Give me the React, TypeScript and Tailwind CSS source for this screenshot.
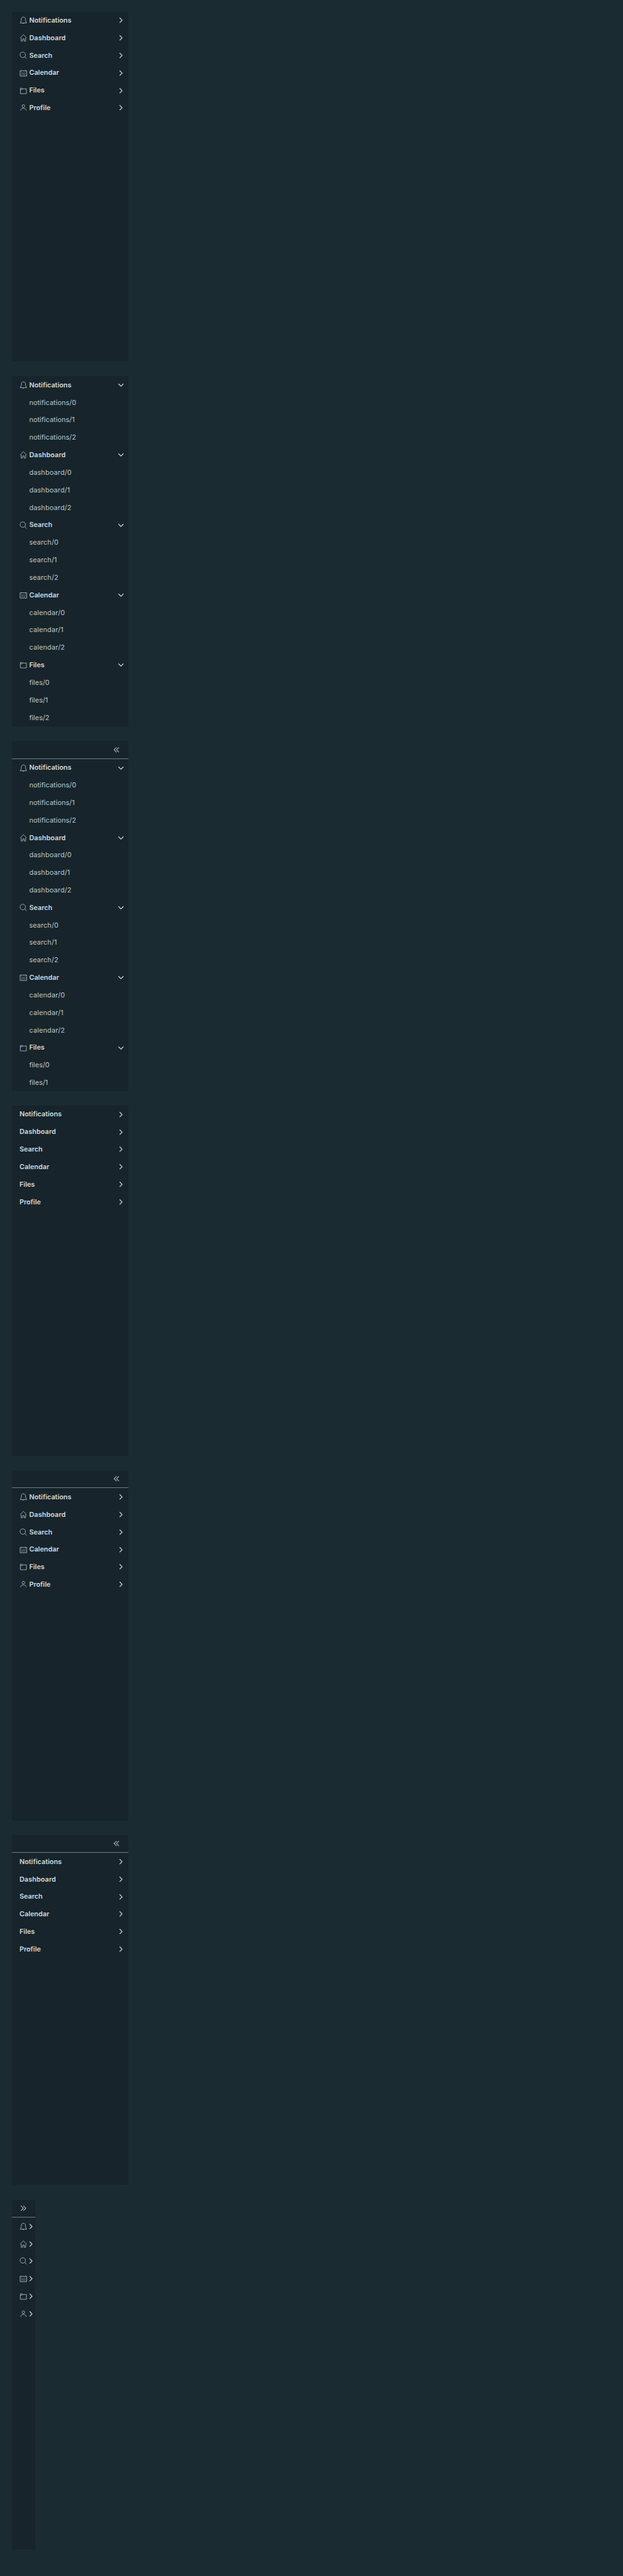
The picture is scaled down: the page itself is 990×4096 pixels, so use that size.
import React from "react";

type IconName = "bell" | "home" | "search" | "calendar" | "folder" | "user";

const paths: Record<IconName, React.ReactNode> = {
  bell: (
    <>
      <path d="M3.4 30.6V29C7 25.4 8.2 22.6 8.2 14C8.2 7.4 12.2 3.4 18 3.4S27.8 7.4 27.8 14C27.8 22.6 29 25.4 32.6 29V30.6Z" />
      <path d="M15.6 32.6H20.4" />
    </>
  ),
  home: (
    <>
      <path d="M2.6 18.6L18 3.4L33.4 18.6" />
      <path d="M7.6 18V32.8H14.4V23H21.6V32.8H28.4V18" />
    </>
  ),
  search: (
    <>
      <circle cx="15.2" cy="15.2" r="12.6" />
      <path d="M24.2 24.2L33.2 33.2" />
    </>
  ),
  calendar: (
    <>
      <path d="M7 7.4H2.8V32H33.2V7.4H29M10.5 7.4H25.5" />
      <path d="M8.6 4V10.6M27.4 4V10.6" />
      <path d="M8.4 16.6H28M8.4 21.4H28M8.4 26.2H28" strokeDasharray="2.6 3" />
    </>
  ),
  folder: <path d="M14.5 9.6L12.6 6.8H4V32H32V9.6H14.5L12.4 12.8H4" />,
  user: (
    <>
      <circle cx="18" cy="10.4" r="6.2" />
      <path d="M5.8 31.8V27.4C8.2 23 12.6 20.8 18 20.8S27.8 23 30.2 27.4V31.8" />
    </>
  ),
};

function Icon({ name }: { name: IconName }) {
  return (
    <svg viewBox="0 0 36 36" className="size-[12.375px] shrink-0 fill-none stroke-[#b8c5cc] stroke-[2.4]">
      {paths[name]}
    </svg>
  );
}

function Caret({ open }: { open: boolean }) {
  return (
    <svg viewBox="0 0 16 16" className="size-[12.375px] shrink-0 fill-none stroke-[#d0d9dd] stroke-[1.6]">
      <path d={open ? "M2.9 5.5L8 10.5L13.1 5.5" : "M5.3 2.9L10.3 8L5.3 13.1"} />
    </svg>
  );
}

function DoubleAngle({ right }: { right: boolean }) {
  return (
    <svg viewBox="0 0 16 16" className="size-[12.375px] shrink-0 fill-none stroke-[#b8c5cc] stroke-[1.3]">
      <path d={right ? "M3 3L8 8L3 13M8 3L13 8L8 13" : "M8 3L3 8L8 13M13 3L8 8L13 13"} />
    </svg>
  );
}

const groups: { label: string; icon: IconName; tracking: string; childTracking: string }[] = [
  { label: "Notifications", icon: "bell", tracking: "tracking-normal", childTracking: "tracking-[0.08px]" },
  { label: "Dashboard", icon: "home", tracking: "tracking-[0.1px]", childTracking: "tracking-[0.18px]" },
  { label: "Search", icon: "search", tracking: "tracking-normal", childTracking: "tracking-[0.13px]" },
  { label: "Calendar", icon: "calendar", tracking: "tracking-normal", childTracking: "tracking-[0.2px]" },
  { label: "Files", icon: "folder", tracking: "tracking-normal", childTracking: "tracking-[0.04px]" },
  { label: "Profile", icon: "user", tracking: "tracking-normal", childTracking: "tracking-normal" },
];

type Row = { group: (typeof groups)[number]; child?: number };

type NavProps = { icons?: boolean; open?: boolean; toggle?: boolean; collapsed?: boolean };

function VerticalNav({ icons = false, open = false, toggle = false, collapsed = false }: NavProps) {
  // Only the rows that fit inside the fixed panel height are rendered.
  const capacity = toggle ? 19 : 20;
  const rows: Row[] = groups
    .flatMap((group): Row[] => [{ group }, ...(open ? [0, 1, 2].map((child) => ({ group, child })) : [])])
    .slice(0, capacity);

  return (
    <nav className={`h-[556.65px] shrink-0 overflow-hidden bg-[#17242b] ${collapsed ? "w-[37.125px]" : "w-[185.625px]"}`}>
      {toggle && (
        <div
          className={`flex h-[28.6px] items-center border-b border-[#6a7f88] ${collapsed ? "justify-center" : "justify-end pr-[12.375px]"}`}
        >
          <DoubleAngle right={collapsed} />
        </div>
      )}
      {rows.map(({ group, child }) =>
        child === undefined ? (
          <div
            key={group.label}
            className={`flex h-[27.833px] items-center pl-[12.375px] ${collapsed ? "" : "pr-[6.188px]"}`}
          >
            {icons && <Icon name={group.icon} />}
            {!collapsed && (
              <span
                className={`grow pt-[1px] text-[10.83px] leading-[16px] font-semibold text-[#d0d9dd] ${group.tracking} ${icons ? "ml-[3.1px]" : ""}`}
              >
                {group.label}
              </span>
            )}
            <Caret open={open} />
          </div>
        ) : (
          <div
            key={`${group.label}-${child}`}
            className={`flex h-[27.833px] items-center pt-[1px] pl-[27.844px] text-[10.83px] leading-[16px] text-[#bcc8cf] ${group.childTracking}`}
          >
            {`${group.label.toLowerCase()}/${child}`}
          </div>
        ),
      )}
    </nav>
  );
}

export default function App() {
  return (
    <main className="flex h-[4096px] w-[990px] flex-col gap-[23.194px] bg-[#1b2b32] pt-[18.555px] pl-[18.5625px] font-['Inter',sans-serif]">
      <VerticalNav icons />
      <VerticalNav icons open />
      <VerticalNav icons open toggle />
      <VerticalNav />
      <VerticalNav icons toggle />
      <VerticalNav toggle />
      <VerticalNav icons toggle collapsed />
    </main>
  );
}
